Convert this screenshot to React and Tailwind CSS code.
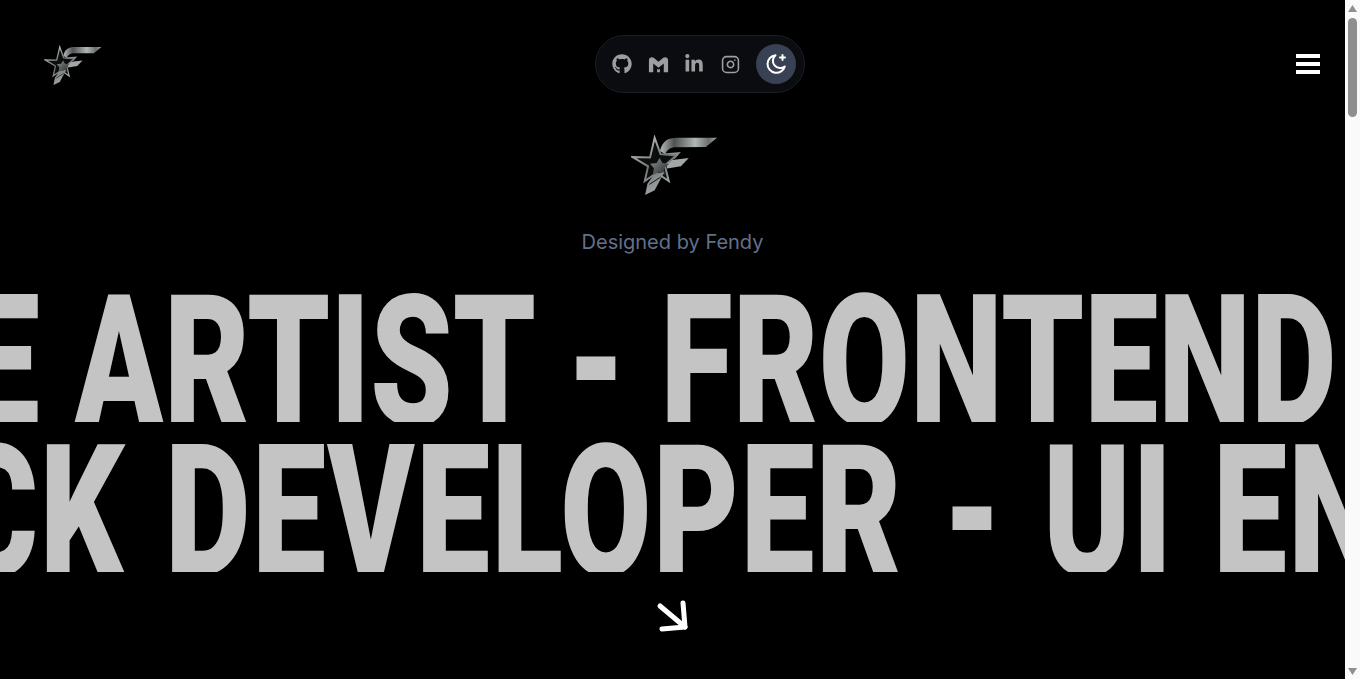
import React from "react";
import { FaGithub, FaLinkedinIn } from "react-icons/fa";
import { FiInstagram } from "react-icons/fi";

function Logo({ className, id }) {
  return (
    <svg viewBox="30 30 265 185" className={className}>
      <defs>
        <linearGradient id={`${id}-bar`} x1="125" y1="50" x2="292" y2="50" gradientUnits="userSpaceOnUse">
          <stop offset="0" stopColor="#a5aaaa" />
          <stop offset="0.22" stopColor="#4f5253" />
          <stop offset="0.6" stopColor="#b0b5b5" />
          <stop offset="0.85" stopColor="#6a6e6e" />
          <stop offset="1" stopColor="#a5a9a9" />
        </linearGradient>
        <linearGradient id={`${id}-steel`} x1="35" y1="40" x2="150" y2="210" gradientUnits="userSpaceOnUse">
          <stop offset="0" stopColor="#c8cccc" />
          <stop offset="0.5" stopColor="#6f7474" />
          <stop offset="1" stopColor="#b5b9b9" />
        </linearGradient>
        <linearGradient id={`${id}-dark`} x1="90" y1="100" x2="140" y2="150" gradientUnits="userSpaceOnUse">
          <stop offset="0" stopColor="#8b9090" />
          <stop offset="1" stopColor="#2b2d2d" />
        </linearGradient>
      </defs>
      <path d="M118 78C126 48 142 38 170 38L292 38L258 66L168 67C150 67 140 74 134 88Z" fill={`url(#${id}-bar)`} />
      <path d="M130 86L182 81L164 101L132 104Z" fill="#8d9191" />
      <path d="M136 108L206 100L182 125L140 132Z" fill="#a3a7a7" />
      <path d="M102 38L120 88L168 92L133 122L145 170L108 145L72 170L82 125L35 97L88 98Z" fill="#0c0d0d" stroke={`url(#${id}-steel)`} strokeWidth="6" strokeLinejoin="miter" />
      <path d="M117 100L126 115L146 118L130 131L134 152L114 143L96 152L100 131L88 117L108 115Z" fill={`url(#${id}-dark)`} />
      <path d="M100 150L132 142L102 198L73 212L80 178Z" fill={`url(#${id}-steel)`} />
      <path d="M86 180L120 158" stroke="#111" strokeWidth="3" />
    </svg>
  );
}

function MoonPlus() {
  return (
    <svg viewBox="0 0 24 24" className="w-6 h-6" fill="none" stroke="currentColor" strokeWidth="2" strokeLinecap="round" strokeLinejoin="round">
      <path d="M11.5 3.2a8.8 8.8 0 1 0 9.3 11.2 7.2 7.2 0 0 1-9.3-11.2Z" />
      <path d="M18.5 3v5M16 5.5h5" />
    </svg>
  );
}

function GmailMark() {
  return (
    <svg viewBox="0 0 24 24" className="w-[23px] h-[23px]" fill="currentColor">
      <path d="M2 20V7.5C2 4.5 5 3.5 7 5L12 9L17 5C19 3.5 22 4.5 22 7.5V20H17.5V11L12 15.5L6.5 11V20Z" />
      <path d="M10.5 16.5L12 17.5L13.5 16.5V20H10.5Z" />
    </svg>
  );
}

function Scrollbar() {
  return (
    <aside className="w-[15px] shrink-0 bg-[#fafafa] flex flex-col items-center">
      <svg viewBox="0 0 9 7" className="mt-[5px] w-[9px] h-[7px]" fill="#8f8f8f">
        <path d="M4.5 0L9 7H0Z" />
      </svg>
      <div className="mt-[6px] w-[9px] h-[99px] rounded-full bg-[#8f8f8f]" />
      <svg viewBox="0 0 9 7" className="mt-auto mb-[4px] w-[9px] h-[7px]" fill="#8f8f8f">
        <path d="M0 0H9L4.5 7Z" />
      </svg>
    </aside>
  );
}

export default function App() {
  return (
    <div className="h-screen flex overflow-hidden bg-black text-white font-['Inter',sans-serif]">
      <main className="flex-1 min-w-0">
        <header className="flex items-center justify-between pl-[44px] pr-[25px] py-[35px]">
          <div className="w-[60px] mt-[2px]">
            <Logo id="nav" className="w-[58px] h-[41px]" />
          </div>
          <div className="flex items-center px-2 py-2 rounded-full bg-[#0a0c10] border border-[#1b1e27]">
            <a className="w-9 h-10 flex items-center justify-center text-[#9e9e9e]">
              <FaGithub size={20} />
            </a>
            <a className="w-9 h-10 flex items-center justify-center text-[#9e9e9e]">
              <GmailMark />
            </a>
            <a className="w-9 h-10 flex items-center justify-center text-[#9e9e9e]">
              <FaLinkedinIn size={20} />
            </a>
            <a className="w-9 h-10 flex items-center justify-center text-[#9e9e9e]">
              <FiInstagram size={19} />
            </a>
            <button className="ml-2 w-10 h-10 rounded-full flex items-center justify-center bg-[#394255] text-white">
              <MoonPlus />
            </button>
          </div>
          <button className="w-6 flex flex-col gap-1">
            <span className="h-1 bg-white" />
            <span className="h-1 bg-white" />
            <span className="h-1 bg-white" />
          </button>
        </header>

        <section className="flex flex-col items-center">
          <Logo id="hero" className="mt-[7px] ml-[4px] w-[87px] h-[61px]" />
          <p className="mt-[32px] text-xl leading-7 text-[#64708a]">Designed by Fendy</p>

          <div className="mt-4 w-full font-['Roboto',sans-serif] font-black text-[#c4c4c4] text-[184px]">
            <div className="h-[150px] overflow-hidden leading-[180px] whitespace-nowrap">
              <div className="w-max origin-left scale-x-[0.718] -ml-[574px] [word-spacing:2px]">CREATIVE ARTIST - FRONTEND DEVELOPER</div>
            </div>
            <div className="h-[150px] overflow-hidden leading-[180px] whitespace-nowrap">
              <div className="w-max origin-left scale-x-[0.718] -ml-[648px] tracking-[2px] [word-spacing:7px]">FULL STACK DEVELOPER - UI ENGINEER</div>
            </div>
          </div>

          <svg viewBox="0 0 40 40" className="mt-6 w-10 h-10" fill="none" stroke="white" strokeWidth="5" strokeLinecap="round" strokeLinejoin="round">
            <path d="M7 10L32 31" />
            <path d="M30 7L32 31L9 33" />
          </svg>
        </section>
      </main>
      <Scrollbar />
    </div>
  );
}
